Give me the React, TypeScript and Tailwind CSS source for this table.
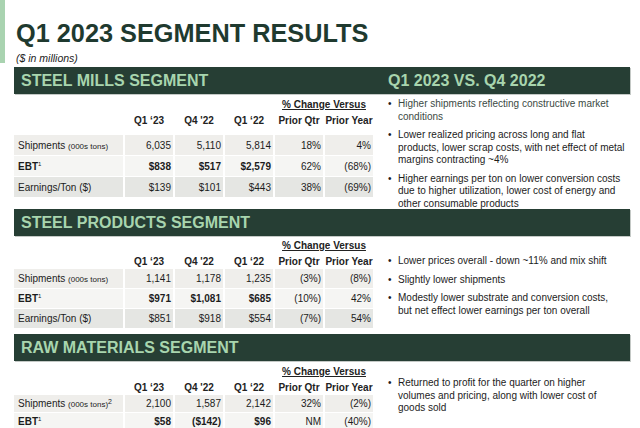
import React from "react";

type Row = {
  label: React.ReactNode;
  values: string[];
  bold?: boolean;
  bg: string;
};

const COLS = "grid grid-cols-[109px_repeat(5,48px)] gap-x-[2px]";

const Sup = ({ children }: { children: React.ReactNode }) => (
  <span className="relative -top-[4px] text-[6px] font-normal">{children}</span>
);

function Band({ title, side }: { title: string; side?: string }) {
  return (
    <div className="ml-[14px] flex h-[27px] w-[616px] items-center bg-[#263e34] text-[16px] font-bold leading-none text-[#a8d5ae] shadow-[1px_1px_0_#c4c9c6]">
      <div className="w-[360px] pl-[7px]">{title}</div>
      {side && <div className="pl-[14px]">{side}</div>}
    </div>
  );
}

function SegmentTable({
  rows,
  top,
  headGap,
  rowH,
}: {
  rows: Row[];
  top: string;
  headGap: string;
  rowH: string;
}) {
  return (
    <div className={`ml-[14px] w-[360px] shrink-0 ${top}`}>
      {/* Cabeçalho */}
      <div className={`${COLS} text-[10px] font-bold leading-[12px] text-[#222]`}>
        <div className="col-span-2 col-start-5 text-center underline underline-offset-[1px]">
          % Change Versus
        </div>
        <div className="col-start-2 mt-[4px] text-center">Q1 ‘23</div>
        <div className="mt-[4px] text-center">Q4 '22</div>
        <div className="mt-[4px] text-center">Q1 ‘22</div>
        <div className="mt-[4px] text-center">Prior Qtr</div>
        <div className="mt-[4px] whitespace-nowrap text-center">Prior Year</div>
      </div>

      {/* Linhas */}
      <div className={`flex flex-col gap-[1px] ${headGap}`}>
        {rows.map((r, i) => (
          <div key={i} className={`${COLS} ${rowH} text-[10px] text-[#1c1c1c]`}>
            <div className={`${r.bg} flex items-center pl-[4px] ${r.bold ? "font-bold" : ""}`}>
              {r.label}
            </div>
            {r.values.map((v, j) => (
              <div
                key={j}
                className={`${r.bg} flex items-center justify-end pr-[2px] ${
                  r.bold && j < 3 ? "font-bold" : ""
                }`}
              >
                {v}
              </div>
            ))}
          </div>
        ))}
      </div>
    </div>
  );
}

function Bullets({ items, className }: { items: React.ReactNode[]; className: string }) {
  return (
    <ul className={`ml-[14px] flex flex-col gap-[6px] text-[10px] leading-[12.5px] text-[#1c1c1c] ${className}`}>
      {items.map((t, i) => (
        <li key={i} className="flex">
          <span className="w-[10px] shrink-0">•</span>
          <span>{t}</span>
        </li>
      ))}
    </ul>
  );
}

const ROW1 = "bg-[#efeeeb]";
const ROW2 = "bg-[#f5f5f3]";
const ROW3 = "bg-[#e5e6e3]";

const shipments = (note?: boolean) => (
  <span>
    Shipments <span className="text-[8px]">(000s tons)</span>
    {note && <span className="relative -top-[3px] text-[7px]">2</span>}
  </span>
);

const ebt = (
  <span>
    EBT<Sup>1</Sup>
  </span>
);

export default function App() {
  return (
    <div className="h-[428px] w-[640px] overflow-hidden bg-white font-['Liberation_Sans',Arial,sans-serif]">
      {/* Título */}
      <div className="flex h-[63px]">
        <div className="h-full w-[5px] bg-[#a9d3b0]" />
        <div className="ml-[11px] pt-[19px]">
          <h1 className="text-[25.3px] font-bold leading-[28px] text-[#1f3a2f]">
            Q1 2023 SEGMENT RESULTS
          </h1>
          <p className="mt-[5px] text-[10.5px] italic leading-[13px] text-[#222]">($ in millions)</p>
        </div>
      </div>

      {/* Steel Mills */}
      <div className="mt-[4px]">
        <Band title="STEEL MILLS SEGMENT" side="Q1 2023 VS. Q4 2022" />
        <div className="flex h-[115px]">
          <SegmentTable
            top="pt-[5px]"
            headGap="mt-[8px]"
            rowH="h-[20px]"
            rows={[
              { label: shipments(), values: ["6,035", "5,110", "5,814", "18%", "4%"], bg: ROW1 },
              { label: ebt, bold: true, values: ["$838", "$517", "$2,579", "62%", "(68%)"], bg: ROW2 },
              { label: "Earnings/Ton ($)", values: ["$139", "$101", "$443", "38%", "(69%)"], bg: ROW3 },
            ]}
          />
          <Bullets
            className="w-[238px] pt-[4px]"
            items={[
              <span className="text-[#3b4a44]">Higher shipments reflecting constructive market conditions</span>,
              "Lower realized pricing across long and flat products, lower scrap costs, with net effect of metal margins contracting ~4%",
              "Higher earnings per ton on lower conversion costs due to higher utilization, lower cost of energy and other consumable products",
            ]}
          />
        </div>
      </div>

      {/* Steel Products */}
      <div>
        <Band title="STEEL PRODUCTS SEGMENT" />
        <div className="flex h-[98px]">
          <SegmentTable
            top="pt-[4px]"
            headGap="mt-[1px]"
            rowH="h-[19px]"
            rows={[
              { label: shipments(), values: ["1,141", "1,178", "1,235", "(3%)", "(8%)"], bg: ROW1 },
              { label: ebt, bold: true, values: ["$971", "$1,081", "$685", "(10%)", "42%"], bg: ROW2 },
              { label: "Earnings/Ton ($)", values: ["$851", "$918", "$554", "(7%)", "54%"], bg: ROW3 },
            ]}
          />
          <Bullets
            className="w-[228px] pt-[19px]"
            items={[
              "Lower prices overall - down ~11% and mix shift",
              "Slightly lower shipments",
              "Modestly lower substrate and conversion costs, but net effect lower earnings per ton overall",
            ]}
          />
        </div>
      </div>

      {/* Raw Materials */}
      <div>
        <Band title="RAW MATERIALS SEGMENT" />
        <div className="flex">
          <SegmentTable
            top="pt-[5px]"
            headGap="mt-[1px]"
            rowH="h-[17px]"
            rows={[
              { label: shipments(true), values: ["2,100", "1,587", "2,142", "32%", "(2%)"], bg: ROW1 },
              { label: ebt, bold: true, values: ["$58", "($142)", "$96", "NM", "(40%)"], bg: ROW2 },
            ]}
          />
          <Bullets
            className="w-[215px] pt-[16px]"
            items={[
              "Returned to profit for the quarter on higher volumes and pricing, along with lower cost of goods sold",
            ]}
          />
        </div>
      </div>
    </div>
  );
}
